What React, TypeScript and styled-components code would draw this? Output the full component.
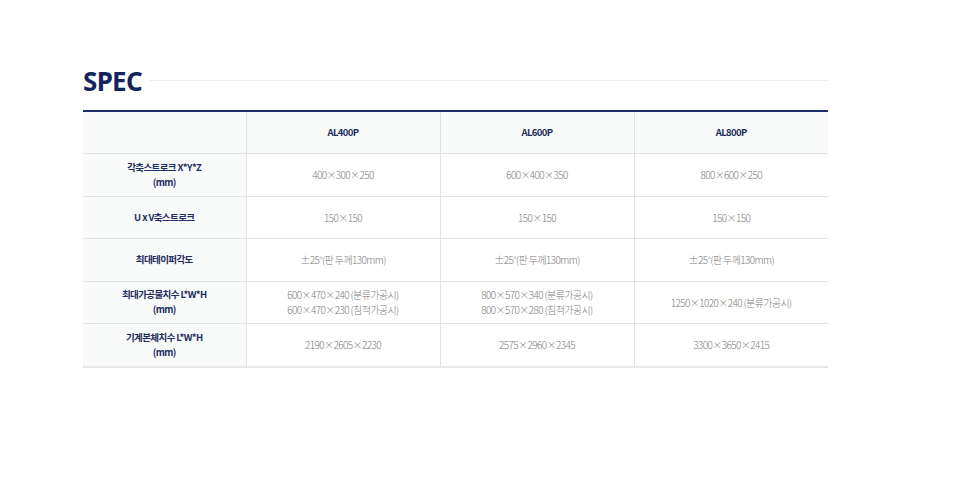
import styled, { createGlobalStyle } from "styled-components";

const GlobalStyle = createGlobalStyle`
  body {
    margin: 0;
    background: #fff;
    font-family: "Noto Sans CJK KR", "Noto Sans", sans-serif;
  }
`;

const MODELS = ["AL400P", "AL600P", "AL800P"];

const ROWS: { label: string[]; values: string[][] }[] = [
  {
    label: ["각축스트로크 X*Y*Z", "(mm)"],
    values: [["400×300×250"], ["600×400×350"], ["800×600×250"]],
  },
  {
    label: ["U x V축스트로크"],
    values: [["150×150"], ["150×150"], ["150×150"]],
  },
  {
    label: ["최대테이퍼각도"],
    values: [["±25°(판 두께130mm)"], ["±25°(판 두께130mm)"], ["±25°(판 두께130mm)"]],
  },
  {
    label: ["최대가공물치수 L*W*H", "(mm)"],
    values: [
      ["600×470×240 (분류가공시)", "600×470×230 (침적가공시)"],
      ["800×570×340 (분류가공시)", "800×570×280 (침적가공시)"],
      ["1250×1020×240 (분류가공시)"],
    ],
  },
  {
    label: ["기계본체치수 L*W*H", "(mm)"],
    values: [["2190×2605×2230"], ["2575×2960×2345"], ["3300×3650×2415"]],
  },
];

const App = () => {
  return (
    <>
      <GlobalStyle />
      <Section>
        <TitleRow>
          <Title>SPEC</Title>
          <TitleLine />
        </TitleRow>
        <Table>
          <colgroup>
            <col style={{ width: 163 }} />
            <col />
            <col />
            <col />
          </colgroup>
          <thead>
            <tr>
              <HeadCell />
              {MODELS.map((m) => (
                <HeadCell key={m}>{m}</HeadCell>
              ))}
            </tr>
          </thead>
          <tbody>
            {ROWS.map((row) => (
              <tr key={row.label[0]}>
                <LabelCell>
                  {row.label.map((l) => (
                    <Line key={l}>{l}</Line>
                  ))}
                </LabelCell>
                {row.values.map((v, i) => (
                  <ValueCell key={i}>
                    {v.map((t) => (
                      <Line key={t}>{t}</Line>
                    ))}
                  </ValueCell>
                ))}
              </tr>
            ))}
          </tbody>
        </Table>
      </Section>
    </>
  );
};

const Section = styled.div`
  width: 745px;
  margin-left: 83px;
  padding-top: 64px;
`;

const TitleRow = styled.div`
  display: flex;
  align-items: center;
  gap: 8px;
  margin-bottom: 12px;
`;

const Title = styled.h2`
  margin: 0;
  font-family: "Noto Sans", "Noto Sans CJK KR", sans-serif;
  font-size: 26px;
  font-weight: 700;
  line-height: 34px;
  color: #14245c;
  letter-spacing: -0.7px;
`;

const TitleLine = styled.div`
  flex: 1;
  height: 1px;
  background: #ececec;
  margin-top: -2px;
`;

const Table = styled.table`
  width: 100%;
  border-collapse: collapse;
  table-layout: fixed;
  border-top: 2px solid #1c2d69;
  border-bottom: 2px solid #e9e9e9;
`;

const Cell = styled.td`
  height: 41.5px;
  padding: 0 8px;
  text-align: center;
  vertical-align: middle;
  font-size: 10px;
  line-height: 15px;
  border-bottom: 1px solid #e2e2e2;
  border-left: 1px solid #e2e2e2;
  &:first-child {
    border-left: none;
  }
`;

const HeadCell = styled(Cell).attrs({ as: "th" })`
  background: #f8f9f9;
  color: #1e2d5e;
  font-size: 9.5px;
  font-weight: 700;
  letter-spacing: -0.6px;
  height: 41px;
`;

const LabelCell = styled(Cell)`
  background: #f8f9f9;
  color: #1e2d5e;
  font-size: 9.5px;
  font-weight: 700;
  letter-spacing: -0.6px;
`;

const ValueCell = styled(Cell)`
  color: #7a7a7a;
  font-weight: 300;
  letter-spacing: -0.6px;
`;

const Line = styled.div``;

export default App;
